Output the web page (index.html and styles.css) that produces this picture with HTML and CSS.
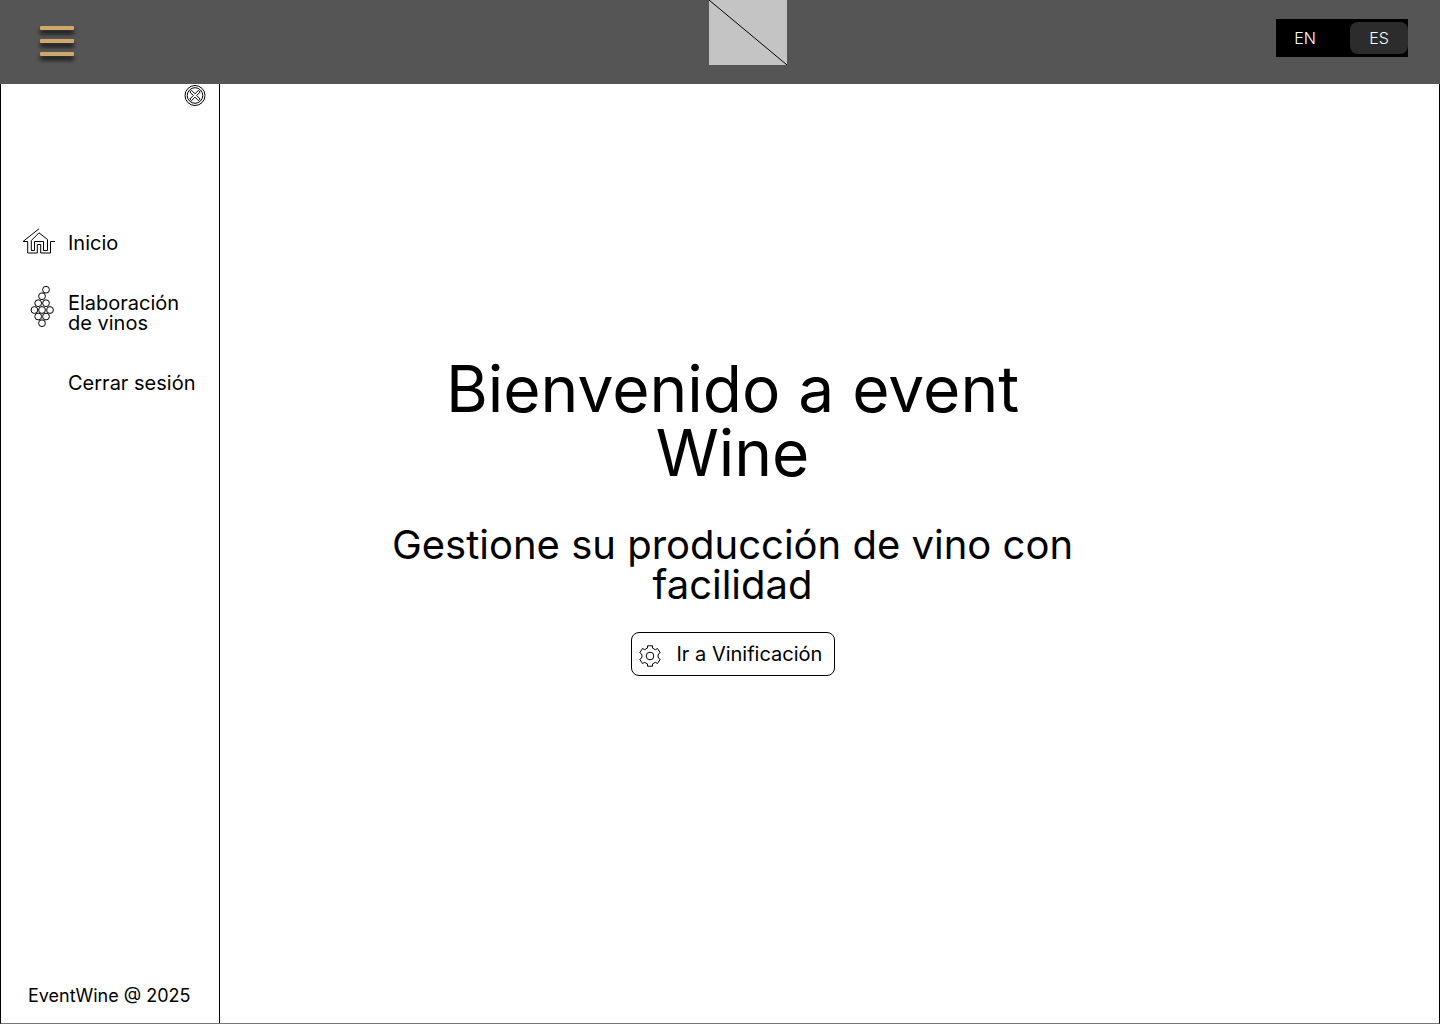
FILE: index.html
```html
<!DOCTYPE html>
<html lang="es">
<head>
<meta charset="utf-8">
<meta name="viewport" content="width=device-width, initial-scale=1">
<title>EventWine</title>
<link rel="stylesheet" href="styles.css">
</head>
<body>
<header class="topbar">
  <button class="menu-button" type="button" aria-label="Menú">
    <span class="menu-bar"></span>
    <span class="menu-bar"></span>
    <span class="menu-bar"></span>
  </button>
  <svg class="logo" viewBox="0 0 78 65" aria-hidden="true">
    <path d="M0 0 78 65" stroke="#000" fill="none"/>
  </svg>
  <div class="lang">
    <button class="lang-option" type="button">EN</button>
    <button class="lang-option lang-active" type="button">ES</button>
  </div>
</header>
<div class="layout">
  <aside class="sidebar">
    <button class="close-button" type="button" aria-label="Cerrar">
      <svg viewBox="0 0 22 22" fill="none" stroke="#000">
        <circle cx="11" cy="10.500" r="10"/>
        <circle cx="11" cy="10.500" r="7.800"/>
        <path d="M7.500 5.300 11 8.800l3.500-3.500 1.700 1.700-3.500 3.500 3.500 3.500-1.700 1.700-3.500-3.500-3.500 3.500L5.800 14l3.500-3.500L5.800 7z"/>
      </svg>
    </button>
    <nav class="nav">
      <a class="nav-link" href="#inicio">
        <svg class="nav-icon" viewBox="0 0 36 36" fill="none" stroke="#000">
          <path d="M19 3.800 3 16.500H7.700V28H17.300V19.500H20.700V28H30.500V16.500H35"/>
          <path d="M11.300 25.500V15.500L19 7.800 27.500 14.500V25.500H23.500V16.500H14.500V25.500z"/>
        </svg>
        <span>Inicio</span>
      </a>
      <a class="nav-link" href="#elaboracion">
        <svg class="nav-icon nav-icon-tall" viewBox="0 0 36 44" fill="none" stroke="#000">
          <circle cx="26" cy="4.700" r="3.400"/>
          <circle cx="22" cy="11.200" r="3.400"/>
          <circle cx="18.200" cy="18.200" r="3.400"/>
          <circle cx="26" cy="18.200" r="3.400"/>
          <circle cx="14.400" cy="25" r="3.400"/>
          <circle cx="22" cy="25" r="3.400"/>
          <circle cx="30" cy="25" r="3.400"/>
          <circle cx="18.200" cy="31.500" r="3.400"/>
          <circle cx="26" cy="31.500" r="3.400"/>
          <circle cx="22" cy="38.200" r="3.400"/>
        </svg>
        <span>Elaboración de vinos</span>
      </a>
      <a class="nav-link nav-link-plain" href="#salir">Cerrar sesión</a>
    </nav>
    <footer class="copyright">EventWine @ 2025</footer>
  </aside>
  <main class="content">
    <h1 class="title">Bienvenido a event Wine</h1>
    <p class="subtitle">Gestione su producción de vino con facilidad</p>
    <button class="action" type="button">
      <svg class="gear" viewBox="0 0 24 24" fill="none" stroke="#000" stroke-linejoin="round">
        <circle cx="12" cy="14" r="3.800"/>
        <path d="M9.500 3.800h5v2.300q1.500.5 2.700 1.600l2.300-1.200 2.700 4.200-1.800 1.300q-.8 2 0 4l1.800 1.300-2.700 4.200-2.300-1.200q-1.200 1.100-2.700 1.600v2.300h-5v-2.300q-1.500-.5-2.700-1.600l-2.300 1.200-2.700-4.200L3.600 16q.8-2 0-4L1.800 10.700l2.700-4.200 2.300 1.200Q8 6.600 9.500 6.100z"/>
      </svg>
      <span>Ir a Vinificación</span>
    </button>
  </main>
</div>
</body>
</html>
```
FILE: styles.css
```css
* {
  box-sizing: border-box;
}

body {
  margin: 0;
  min-height: 100vh;
  display: flex;
  flex-direction: column;
  background: #fff;
  color: #000;
  font-family: Inter, "Liberation Sans", sans-serif;
  font-size: 20px;
  font-weight: 400;
  line-height: 20px;
}

button {
  font: inherit;
  color: inherit;
  background: none;
  border: 0;
  padding: 0;
  cursor: pointer;
}

svg {
  display: block;
}

.topbar {
  display: grid;
  grid-template-columns: 1fr 78px 1fr;
  align-items: start;
  height: 84px;
  padding: 0 32px 0 88px;
  background: #555;
}

.menu-button {
  display: flex;
  flex-direction: column;
  gap: 9px;
  width: 34px;
  margin: 26px 0 0 -48px;
}

.menu-bar {
  height: 4px;
  border-radius: 1px;
  background: #cfa96b;
  box-shadow: 0 4px 4px rgba(0, 0, 0, 0.8);
}

.logo {
  width: 78px;
  height: 65px;
  background: #c4c4c4;
}

.lang {
  justify-self: end;
  display: flex;
  justify-content: space-between;
  width: 132px;
  margin-top: 19px;
  padding: 3px 0;
  background: #000;
}

.lang-option {
  width: 58px;
  height: 32px;
  border-radius: 8px;
  color: #fff;
  font-size: 16px;
  font-weight: 300;
}

.lang-active {
  background: #2c2c2c;
}

.layout {
  flex: 1;
  display: flex;
  border: solid #000;
  border-width: 0 1px 1px;
  border-bottom-color: #777;
}

.sidebar {
  display: flex;
  flex-direction: column;
  width: 219px;
  border-right: 1px solid #000;
}

.close-button {
  align-self: flex-end;
  width: 22px;
  height: 22px;
  margin: 1px 13px 0 0;
}

.nav {
  display: flex;
  flex-direction: column;
  gap: 40px;
  padding: 126px 16px 0 19px;
}

.nav-link {
  display: flex;
  gap: 12px;
  color: inherit;
  text-decoration: none;
}

.nav-link-plain {
  padding-left: 48px;
  white-space: nowrap;
}

.nav-icon {
  flex: none;
  width: 36px;
  height: 36px;
  margin: -8px 0;
}

.nav-icon-tall {
  height: 44px;
}

.copyright {
  margin-top: auto;
  padding: 0 0 17px 27px;
  font-size: 18px;
}

.content {
  flex: 1;
  display: flex;
  flex-direction: column;
  align-items: center;
  justify-content: center;
  padding: 0 194px 74px 0;
  text-align: center;
}

.title {
  max-width: 680px;
  margin: 0 0 40px;
  font-size: 64px;
  line-height: 64px;
  font-weight: inherit;
}

.subtitle {
  max-width: 760px;
  margin: 0 0 27px;
  font-size: 40px;
  line-height: 40px;
}

.action {
  display: flex;
  align-items: center;
  gap: 15px;
  width: 204px;
  height: 44px;
  padding: 0 6px;
  border: 1px solid #000;
  border-radius: 8px;
}

.gear {
  width: 24px;
  height: 24px;
  overflow: visible;
}
```
